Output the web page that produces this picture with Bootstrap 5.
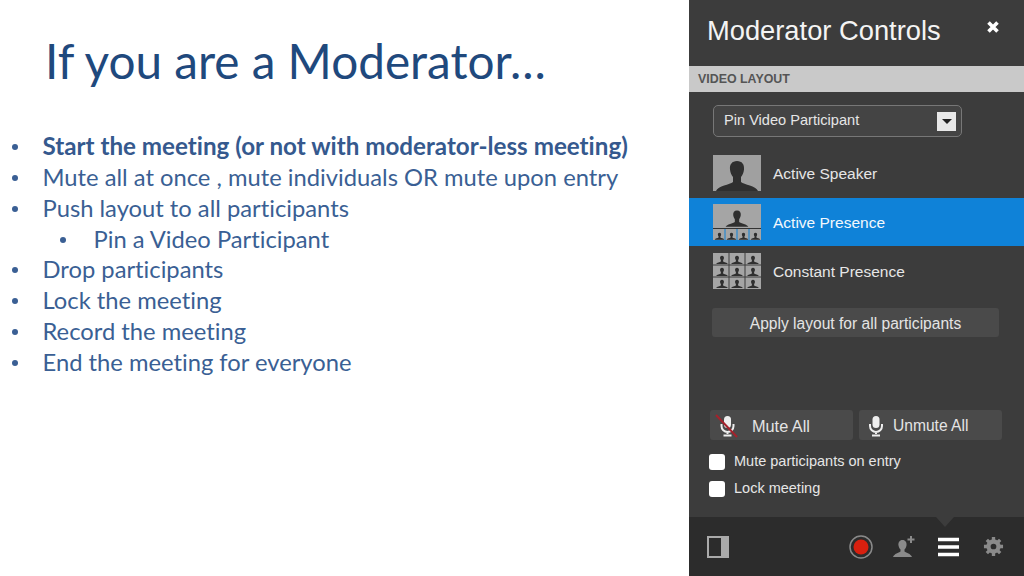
<!DOCTYPE html>
<html lang="en">
<head>
  <meta charset="UTF-8" />
  <meta name="viewport" content="width=device-width, initial-scale=1.0"/>
  <title>If you are a Moderator</title>
  <link href="https://cdn.jsdelivr.net/npm/bootstrap@5.3.3/dist/css/bootstrap.min.css" rel="stylesheet"/>
  <style>
    html, body { height: 576px; overflow: hidden; background: #fff; }
    .slide-wrap { height: 576px; }
    .slide-side { width: 689px; font-family: Lato, "Liberation Sans", sans-serif; color: #3a5f94; font-variant-ligatures: none; }
    .slide-title { font-family: Lato, sans-serif; font-variant-ligatures: none; font-size: 47.7px; font-weight: 400; color: #1f497d; line-height: 56px; margin: 33px 0 0 45px; }
    .slide-list { list-style: none; margin: 42px 0 0 0; padding: 0 0 0 11px; font-size: 23.75px; line-height: 30.85px; }
    .slide-list li { position: relative; padding-left: 31.5px; }
    .slide-list li::before { content: ""; position: absolute; left: 1px; top: 13px; width: 6px; height: 6px; border-radius: 50%; background: #3a5f94; }
    .slide-list li.sub-item { margin-left: 51px; }
    .slide-list li.sub-item::before { left: -2px; }
    .slide-list li.lead-item { font-weight: 700; color: #35598e; font-size: 24.2px; }

    .mod-panel { width: 335px; height: 576px; background: #3c3c3c; color: #e6e6e6; font-family: "Liberation Sans", Arial, sans-serif; font-size: 15.5px; }
    .mod-head { height: 66px; padding: 15px 0 0 18px; }
    .mod-head-title { font-size: 27.3px; line-height: 32px; color: #f4f4f4; }
    .mod-close { margin: 5px 24px 0 0; }
    .mod-section { height: 26px; background: #c9c9c9; color: #555; font-size: 12.4px; font-weight: 700; line-height: 26px; padding-left: 9px; }
    .mod-select { width: 249px; height: 32px; margin: 13px 0 0 24px; border: 1px solid #777; border-radius: 5px; background: #444; padding: 1px 5px 0 10px; font-size: 14.6px; }
    .mod-select-arrow { width: 19px; height: 19px; background: #e8e8e8; }
    .mod-select-arrow::after { content: ""; border: 5px solid transparent; border-top: 5px solid #222; border-bottom: 0; }
    .layout-row { padding-left: 24px; gap: 12px; height: 36px; }
    .layout-row.is-active { height: 49px; background: #0f82d8; color: #f2f8fd; margin: 7px 0; }
    .layout-row.first-row { margin-top: 18px; }
    .layout-label { padding-top: 1px; }
    .layout-thumb { width: 48px; height: 36px; display: block; }
    .mod-btn { height: 30px; border-radius: 3px; background: #4a4a4a; color: #e4e4e4; border: 0; font-size: 15.6px; padding: 1px 0 0; }
    .apply-btn { width: 287px; height: 29px; margin: 19px 0 0 23px; }
    .mute-row { margin: 73px 0 0 21px; gap: 6px; }
    .mute-btn { width: 143px; }
    .mute-all-label { margin-left: 12px; font-size: 16.3px; }
    .mod-check { margin: 14px 0 0 20px; gap: 9px; font-size: 14.5px; height: 16px; }
    .mod-check + .mod-check { margin-top: 11px; }
    .mod-check .form-check-input { width: 16px; height: 16px; margin: 0; border: 0; border-radius: 3px; background-color: #fff; }
    .mod-foot { position: relative; height: 59px; margin-top: 20px; background: #2c2c2c; padding: 0 20px 0 18px; }
    .mod-foot::before { content: ""; position: absolute; left: 247px; top: 0; border: 9px solid transparent; border-top: 10px solid #3c3c3c; border-bottom: 0; }
    .tool-rec { margin-right: 20px; }
    .tool-add { margin-right: 23px; }
    .tool-menu { margin-right: 24px; }
  </style>
</head>
<body>
  <div class="slide-wrap d-flex">
    <div class="slide-side">
      <h1 class="slide-title">If you are a Moderator…</h1>
      <ul class="slide-list">
        <li class="lead-item">Start the meeting (or not with moderator-less meeting)</li>
        <li>Mute all at once , mute individuals OR mute upon entry</li>
        <li>Push layout to all participants</li>
        <li class="sub-item">Pin a Video Participant</li>
        <li>Drop participants</li>
        <li>Lock the meeting</li>
        <li>Record the meeting</li>
        <li>End the meeting for everyone</li>
      </ul>
    </div>

    <div class="mod-panel d-flex flex-column">
      <svg width="0" height="0" class="position-absolute">
        <defs>
          <symbol id="person" viewBox="0 0 48 36">
            <path d="M24 6c-5 0-7.500 3.500-7 8.500 .3 3 1.500 5.500 3 7.500v5c-3 2.500-15 4-17 9h42c-2-5-14-6.500-17-9v-5c1.500-2 2.700-4.500 3-7.500 .5-5-2-8.500-7-8.500z"/>
          </symbol>
        </defs>
      </svg>
      <div class="mod-head d-flex justify-content-between align-items-start">
        <div class="mod-head-title">Moderator Controls</div>
        <svg class="mod-close" width="14" height="14" viewBox="0 0 14 14"><path d="M2.500 2.500l9 9M11.500 2.500l-9 9" stroke="#fff" stroke-width="3.600"/></svg>
      </div>
      <div class="mod-section">VIDEO LAYOUT</div>
      <div class="mod-select d-flex align-items-center justify-content-between">
        <span>Pin Video Participant</span>
        <span class="mod-select-arrow d-flex align-items-center justify-content-center"></span>
      </div>

      <div class="layout-row first-row d-flex align-items-center">
        <svg class="layout-thumb" viewBox="0 0 48 36"><rect width="48" height="36" fill="#a0a0a0"/><use href="#person" fill="#2f2f2f"/></svg>
        <span class="layout-label">Active Speaker</span>
      </div>
      <div class="layout-row is-active d-flex align-items-center">
        <svg class="layout-thumb" viewBox="0 0 48 36">
          <rect width="48" height="36" fill="#a5a5a5"/>
          <use href="#person" x="11" y="3" width="26" height="20" fill="#2f2f2f"/>
          <rect y="24" width="48" height="1" fill="#333"/>
          <g fill="#2f2f2f"><use href="#person" x="1" y="27" width="11" height="9"/><use href="#person" x="13" y="27" width="11" height="9"/><use href="#person" x="25" y="27" width="11" height="9"/><use href="#person" x="37" y="27" width="11" height="9"/></g>
          <path d="M12 25v11M24 25v11M36 25v11" stroke="#0f82d8"/>
        </svg>
        <span class="layout-label">Active Presence</span>
      </div>
      <div class="layout-row d-flex align-items-center">
        <svg class="layout-thumb" viewBox="0 0 48 36">
          <rect width="48" height="36" fill="#a5a5a5"/>
          <g fill="#2f2f2f">
            <use href="#person" x="2" y="1" width="14" height="10"/><use href="#person" x="17" y="1" width="14" height="10"/><use href="#person" x="33" y="1" width="14" height="10"/>
            <use href="#person" x="2" y="13" width="14" height="10"/><use href="#person" x="17" y="13" width="14" height="10"/><use href="#person" x="33" y="13" width="14" height="10"/>
            <use href="#person" x="2" y="25" width="14" height="10"/><use href="#person" x="17" y="25" width="14" height="10"/><use href="#person" x="33" y="25" width="14" height="10"/>
          </g>
          <path d="M16 0v36M32 0v36M0 12h48M0 24h48" stroke="#3c3c3c"/>
        </svg>
        <span class="layout-label">Constant Presence</span>
      </div>

      <button class="mod-btn apply-btn">Apply layout for all participants</button>

      <div class="mute-row d-flex">
        <button class="mod-btn mute-btn d-flex align-items-center">
          <svg class="ms-1" width="26" height="24" viewBox="0 0 26 24"><rect x="10" y="2" width="7" height="12" rx="3.500" fill="#eee"/><path d="M7.500 10v2a6 6 0 0 0 12 0v-2M13.500 18v2M9.500 21.500h8" fill="none" stroke="#eee" stroke-width="2"/><path d="M2 1l21 22" stroke="#a5222c" stroke-width="2"/></svg>
          <span class="mute-all-label">Mute All</span>
        </button>
        <button class="mod-btn mute-btn d-flex align-items-center">
          <svg class="ms-2" width="18" height="24" viewBox="0 0 18 24"><rect x="5.500" y="2" width="7" height="12" rx="3.500" fill="#eee"/><path d="M3 10v2a6 6 0 0 0 12 0v-2M9 18v2M5 21.500h8" fill="none" stroke="#eee" stroke-width="2"/></svg>
          <span class="ms-2">Unmute All</span>
        </button>
      </div>

      <label class="mod-check d-flex align-items-center"><input class="form-check-input" type="checkbox"/> Mute participants on entry</label>
      <label class="mod-check d-flex align-items-center"><input class="form-check-input" type="checkbox"/> Lock meeting</label>

      <div class="mod-foot d-flex align-items-center">
        <svg width="22" height="22" viewBox="0 0 22 22"><rect x="1" y="1" width="20" height="20" fill="none" stroke="#aaa" stroke-width="2"/><rect x="14" y="1" width="7" height="20" fill="#aaa"/></svg>
        <div class="d-flex align-items-center ms-auto">
          <svg class="tool-rec" width="24" height="24" viewBox="0 0 24 24"><circle cx="12" cy="12" r="11" fill="none" stroke="#8a8a8a" stroke-width="1.500"/><circle cx="12" cy="12" r="7.500" fill="#d8200f"/></svg>
          <svg class="tool-add" width="22" height="22" viewBox="0 0 22 22"><path d="M9.500 4c-3 0-4.500 2.500-4 5.500.2 1.500 1 3 2 4v2c-2 1.500-6 2-7.500 5.500h19c-1.500-3.500-5.500-4-7.500-5.500v-2c1-1 1.800-2.500 2-4 .5-3-1-5.500-4-5.500z" fill="#8a8a8a"/><path d="M18 0v7M14.500 3.500h7" stroke="#8a8a8a" stroke-width="2"/></svg>
          <svg class="tool-menu" width="21" height="20" viewBox="0 0 21 20"><path d="M0 2.500h21M0 10h21M0 17.500h21" stroke="#fff" stroke-width="3.500"/></svg>
          <svg width="21" height="21" viewBox="0 0 22 22"><path d="M11 3.500a7.500 7.500 0 1 0 0 15a7.500 7.500 0 1 0 0-15zm0 4.500a3 3 0 1 1 0 6a3 3 0 1 1 0-6z" fill="#8a8a8a" fill-rule="evenodd"/><path d="M11 1v20M1 11h20M4 4l14 14M18 4L4 18" stroke="#8a8a8a" stroke-width="3.500" stroke-dasharray="4 12"/></svg>
        </div>
      </div>
    </div>
  </div>
  <script src="https://cdn.jsdelivr.net/npm/bootstrap@5.3.3/dist/js/bootstrap.bundle.min.js"></script>
</body>
</html>
